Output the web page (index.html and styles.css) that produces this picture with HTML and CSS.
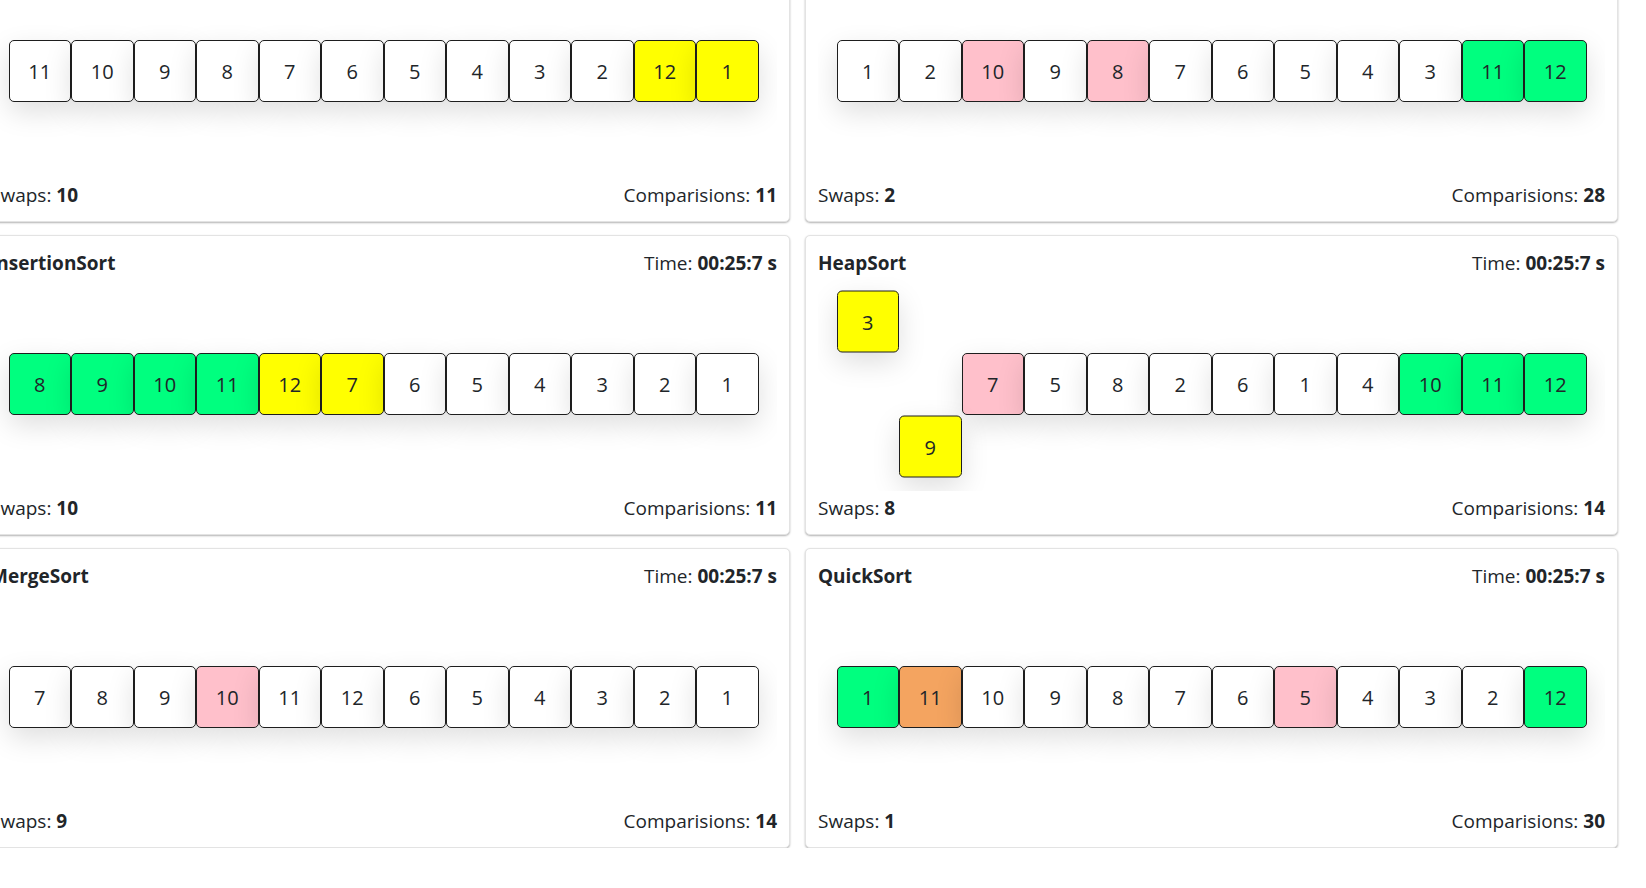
FILE: index.html
```html
<!DOCTYPE html>
<html lang="en">
<head>
<meta charset="utf-8">
<title>Sorting Visualizer</title>
<link rel="stylesheet" href="styles.css">
</head>
<body>
<main class="board">
  <section class="card">
    <header class="card-head"><span class="title">BubbleSort</span><span>Time: <b>00:25:7 s</b></span></header>
    <div class="track"><div class="row">
      <div class="cell">11</div><div class="cell">10</div><div class="cell">9</div><div class="cell">8</div><div class="cell">7</div><div class="cell">6</div><div class="cell">5</div><div class="cell">4</div><div class="cell">3</div><div class="cell">2</div><div class="cell yellow">12</div><div class="cell yellow">1</div>
    </div></div>
    <footer class="card-foot"><span>Swaps: <b>10</b></span><span>Comparisions: <b>11</b></span></footer>
  </section>
  <section class="card">
    <header class="card-head"><span class="title">SelectionSort</span><span>Time: <b>00:25:7 s</b></span></header>
    <div class="track"><div class="row">
      <div class="cell">1</div><div class="cell">2</div><div class="cell pink">10</div><div class="cell">9</div><div class="cell pink">8</div><div class="cell">7</div><div class="cell">6</div><div class="cell">5</div><div class="cell">4</div><div class="cell">3</div><div class="cell green">11</div><div class="cell green">12</div>
    </div></div>
    <footer class="card-foot"><span>Swaps: <b>2</b></span><span>Comparisions: <b>28</b></span></footer>
  </section>
  <section class="card">
    <header class="card-head"><span class="title">InsertionSort</span><span>Time: <b>00:25:7 s</b></span></header>
    <div class="track"><div class="row">
      <div class="cell green">8</div><div class="cell green">9</div><div class="cell green">10</div><div class="cell green">11</div><div class="cell yellow">12</div><div class="cell yellow">7</div><div class="cell">6</div><div class="cell">5</div><div class="cell">4</div><div class="cell">3</div><div class="cell">2</div><div class="cell">1</div>
    </div></div>
    <footer class="card-foot"><span>Swaps: <b>10</b></span><span>Comparisions: <b>11</b></span></footer>
  </section>
  <section class="card">
    <header class="card-head"><span class="title">HeapSort</span><span>Time: <b>00:25:7 s</b></span></header>
    <div class="track"><div class="row">
      <div class="cell yellow up">3</div><div class="cell yellow down">9</div><div class="cell pink">7</div><div class="cell">5</div><div class="cell">8</div><div class="cell">2</div><div class="cell">6</div><div class="cell">1</div><div class="cell">4</div><div class="cell green">10</div><div class="cell green">11</div><div class="cell green">12</div>
    </div></div>
    <footer class="card-foot"><span>Swaps: <b>8</b></span><span>Comparisions: <b>14</b></span></footer>
  </section>
  <section class="card">
    <header class="card-head"><span class="title">MergeSort</span><span>Time: <b>00:25:7 s</b></span></header>
    <div class="track"><div class="row">
      <div class="cell">7</div><div class="cell">8</div><div class="cell">9</div><div class="cell pink">10</div><div class="cell">11</div><div class="cell">12</div><div class="cell">6</div><div class="cell">5</div><div class="cell">4</div><div class="cell">3</div><div class="cell">2</div><div class="cell">1</div>
    </div></div>
    <footer class="card-foot"><span>Swaps: <b>9</b></span><span>Comparisions: <b>14</b></span></footer>
  </section>
  <section class="card">
    <header class="card-head"><span class="title">QuickSort</span><span>Time: <b>00:25:7 s</b></span></header>
    <div class="track"><div class="row">
      <div class="cell green">1</div><div class="cell orange">11</div><div class="cell">10</div><div class="cell">9</div><div class="cell">8</div><div class="cell">7</div><div class="cell">6</div><div class="cell pink">5</div><div class="cell">4</div><div class="cell">3</div><div class="cell">2</div><div class="cell green">12</div>
    </div></div>
    <footer class="card-foot"><span>Swaps: <b>1</b></span><span>Comparisions: <b>30</b></span></footer>
  </section>
</main>
</body>
</html>
```

FILE: styles.css
```css
html, body {
  margin: 0;
  padding: 0;
  background: #fff;
  overflow: hidden;
}

body {
  font-family: "Open Sans", "Noto Sans", sans-serif;
  font-size: 19px;
  color: #212529;
}

.board {
  display: grid;
  grid-template-columns: 813px 813px;
  grid-auto-rows: 300px;
  column-gap: 15px;
  row-gap: 13px;
  margin: -78px 0 0 -23px;
}

.card {
  display: flex;
  flex-direction: column;
  box-sizing: border-box;
  border: 1px solid #e3e3e3;
  border-radius: 5px;
  box-shadow: 0 1px 2px rgba(0, 0, 0, 0.3);
  background: #fff;
  padding: 12px;
}

.card-head,
.card-foot {
  display: flex;
  justify-content: space-between;
  align-items: center;
  height: 28px;
  line-height: 28px;
  white-space: nowrap;
}

.card-head {
  padding-top: 1px;
}

.card-foot {
  padding-top: 3px;
}

.title {
  font-weight: 700;
}

b {
  font-weight: 700;
}

.track {
  height: 216px;
  overflow: hidden;
  display: flex;
  align-items: center;
  justify-content: center;
}

.row {
  display: flex;
}

.cell {
  box-sizing: border-box;
  width: 62.5px;
  height: 62.5px;
  display: flex;
  align-items: center;
  justify-content: center;
  border: 1px solid #1e1e1e;
  border-radius: 5px;
  background: #fff;
  box-shadow: 0 10px 28px rgba(0, 0, 0, 0.13);
  color: #212529;
  font-size: 20px;
}

.cell.up {
  transform: translateY(-62.5px);
}

.cell.down {
  transform: translateY(62.5px);
}

.yellow { background: #ffff00; }
.green  { background: #00ff7f; }
.pink   { background: #ffc0cb; }
.orange { background: #f4a460; }
```
